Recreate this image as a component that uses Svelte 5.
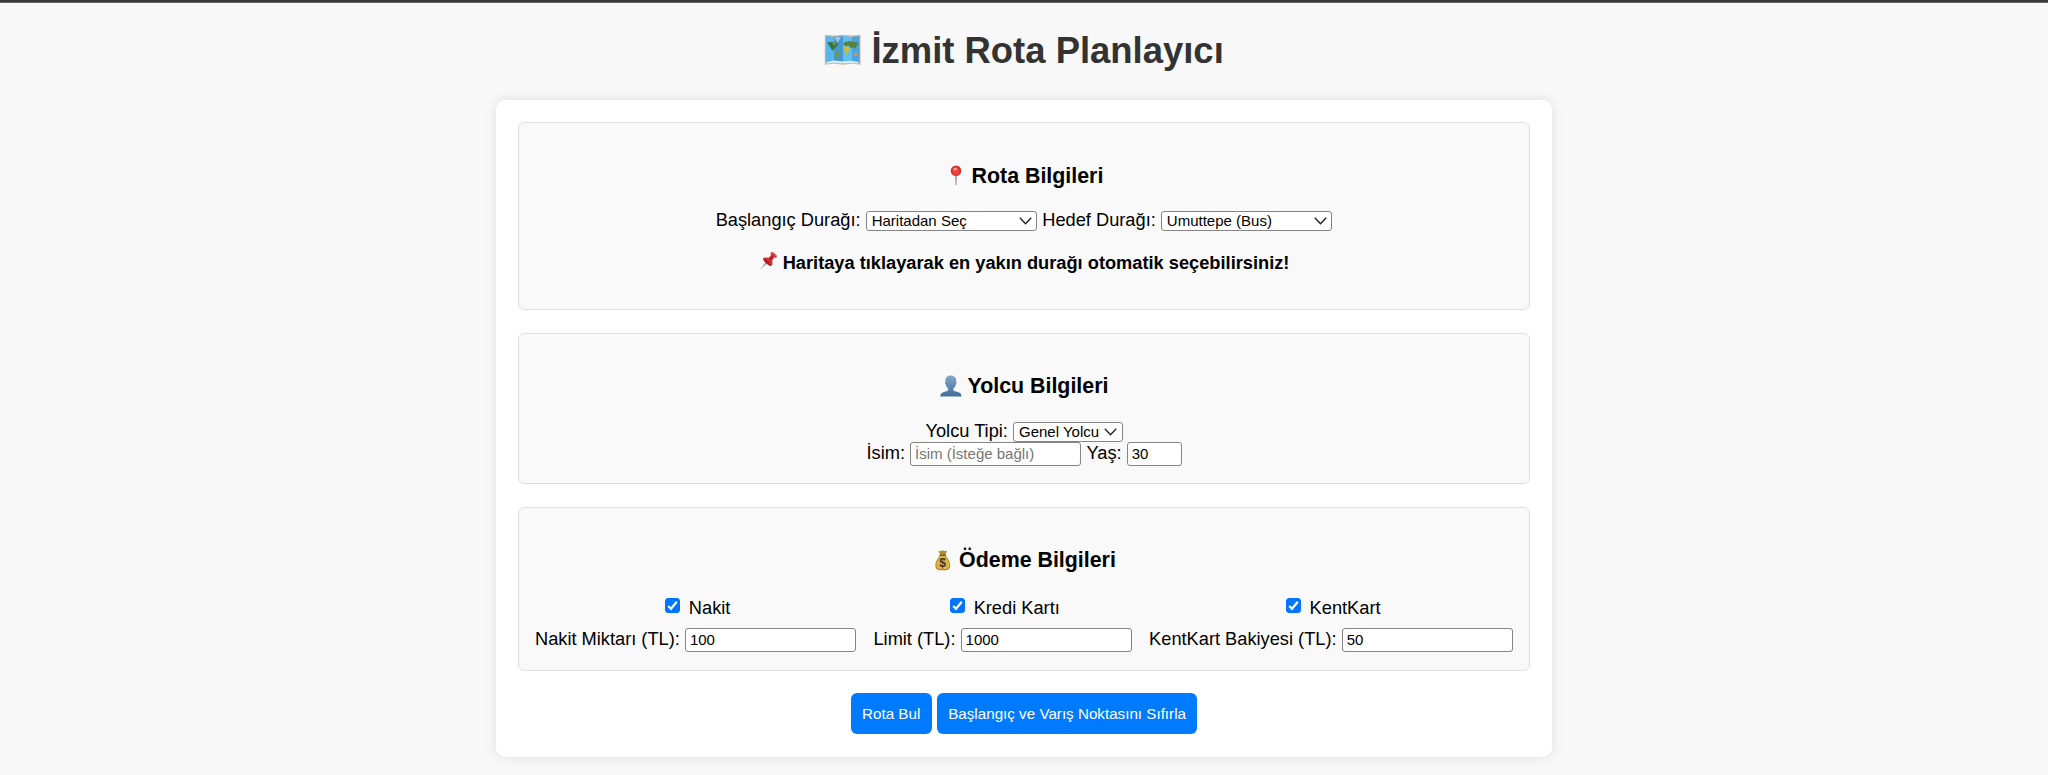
<script>
  let start = $state('Haritadan Seç');
  let target = $state('Umuttepe (Bus)');
  let passenger = $state('Genel Yolcu');
  let name = $state('');
  let age = $state('30');
  let payments = $state([
    { title: 'Nakit', label: 'Nakit Miktarı (TL):', amount: '100', on: true },
    { title: 'Kredi Kartı', label: 'Limit (TL):', amount: '1000', on: true },
    { title: 'KentKart', label: 'KentKart Bakiyesi (TL):', amount: '50', on: true }
  ]);
</script>

<div class="page">
  <h1>
    <svg class="map" width="37" height="32" viewBox="0 0 37 32">
      <path d="M.8.7 10 1.5 19 .7l9 .8 8.5-.8v30l-8.5-.9-9 .9-9-.9-9.2.9z" fill="#d9b99b" />
      <path d="M1.8 2 10 2.7v26L1.5 29.3z" fill="#59b5ed" />
      <path d="m10 2.7 9-.7v27.1l-9-.4z" fill="#4599d2" />
      <path d="m19 2 9 .7v26l-9 .4z" fill="#62bdf0" />
      <path d="m28 2.7 7.5-.7.2 27.3-7.7-.6z" fill="#4aa5de" />
      <path d="m10 4 3-1.2 4 .4-1.5 3-2.5 2-1-2.5z" fill="#a7c5d5" />
      <path d="M3 8.5 7 8l5 .5 2.5 2-2 1.2-1.5 3-2 .5 1 2-2-1L5.500 12z" fill="#39743c" />
      <path d="m11 17 3.500 1 .8 2-2.300 2.500-.8 3-1-2z" fill="#77983b" />
      <path d="m19 10 2-2 4-.7 4 .2 6 1.500-1.800 2-1.500 3-1.500.5-1-2-2.200 2-2-3-4 .8z" fill="#568336" />
      <path d="m19 12.500 4.500-.3 3 2.500-2 2.300-1 4-1.500.5-1.200-4.500-2-2z" fill="#c6bd42" />
      <path d="m8 9 4 .2-1.500 2z" fill="#aaa641" />
      <path d="m30 20 2-1.200 2 1.800-1 1.500-3-.3z" fill="#e29b35" />
      <path d="m3 28 7-1.500 9 1 8-.8 7.500 1.300v1.200L28 28.700l-9 .4-9-.4-8.300.6z" fill="#e4eef3" />
    </svg>
    <span>İzmit Rota Planlayıcı</span>
  </h1>

  <main>
    <section class="route">
      <h3>
        <svg class="pin" width="21" height="22" viewBox="0 0 21 22">
          <path d="M10.200 9h1.600l-.3 11h-.9z" fill="#8d8586" />
          <circle cx="11" cy="5.700" r="5.300" fill="#d9302d" />
          <circle cx="11" cy="6.600" r="3.600" fill="#e9413b" />
          <ellipse cx="10.300" cy="4" rx="2" ry="1.600" fill="#f8a09a" />
        </svg>
        <span>Rota Bilgileri</span>
      </h3>
      <div class="row">
        <label for="start">Başlangıç Durağı:</label>
        <select id="start" bind:value={start}><option>Haritadan Seç</option></select>
        <label for="target">Hedef Durağı:</label>
        <select id="target" bind:value={target}><option>Umuttepe (Bus)</option></select>
      </div>
      <p>
        <svg class="tack" width="19" height="19" viewBox="0 0 19 19">
          <path d="m7.500 10.500 1.300 1.200L1 18.500z" fill="#7f94a3" />
          <path d="M12 1.500c1.300-1.500 6.500 2.600 5.800 4.600-.6 1-1.900.7-2.700.4l-1.900 3.100c.6 2 .4 4.200-.8 5.400C9.400 14.500 5.200 11 4 7.700c1.200-1.300 3.400-1.300 5.300-.7l2.800-2.700c-.4-.9-.8-2-.1-2.800z" fill="#d92f36" />
          <path d="M4 7.700c2.300-.6 6.600 2.400 8.400 7.300C9.400 14.500 5.200 11 4 7.700z" fill="#ad2029" />
          <path d="m10 8 3-3 1.200 1.200-2.700 3.300z" fill="#a91d27" />
          <path d="M13 1.700c1.200-.2 3.800 1.900 4.300 3.600" fill="none" stroke="#f36b69" />
        </svg>
        <span>Haritaya tıklayarak en yakın durağı otomatik seçebilirsiniz!</span>
      </p>
    </section>

    <section class="passenger">
      <h3>
        <svg class="person" width="22" height="22" viewBox="0 0 22 22">
          <defs>
            <linearGradient id="skin" x2="0" y2="1">
              <stop stop-color="#82a9cd" />
              <stop offset="1" stop-color="#426d98" />
            </linearGradient>
          </defs>
          <path d="M10.800.5c3.800 0 5.600 2.500 5.400 6 .7.500.4 2.800-.5 3.200-.4 1.800-1.200 2.900-2.200 3.600v2.200c1.800 1.300 5.600 1.300 7 2.900.8.800 1 2 1 3.100H.3c0-1.100.2-2.300 1-3.100 1.400-1.600 5-1.600 6.800-2.900v-2.200C7 12.600 6.300 11.500 5.900 9.700 5 9.300 4.700 7 5.400 6.500 5.200 3 7 .5 10.800.5z" fill="url(#skin)" />
        </svg>
        <span>Yolcu Bilgileri</span>
      </h3>
      <div class="row">
        <label for="type">Yolcu Tipi:</label>
        <select id="type" class="short" bind:value={passenger}><option>Genel Yolcu</option></select>
      </div>
      <div class="row">
        <label for="name">İsim:</label>
        <input id="name" type="text" placeholder="İsim (İsteğe bağlı)" bind:value={name} />
        <label for="age">Yaş:</label>
        <input id="age" class="age" type="text" bind:value={age} />
      </div>
    </section>

    <section class="payment">
      <h3>
        <svg class="bag" width="21" height="22" viewBox="0 0 21 22">
          <path d="m6.500 1.500 2 .8 2.300-1 2 1 2.300-.8-1.800 4.800H8.200z" fill="#b28b36" />
          <path d="M8 6.500h5.500c2.500 3 4.700 6.300 4.700 9.800 0 3.300-1.800 4.900-4 4.900H7.300c-2.300 0-4-1.600-4-4.900C3.300 12.800 5.500 9.500 8 6.500z" fill="#b28a2e" />
          <path d="M8.500 7h4.300c2.300 2.800 4.300 6 4.300 9 0 2.700-1.500 3.900-3.300 3.900H7.600c-1.900 0-3.200-1.200-3.200-3.900 0-3 1.900-6.200 4.100-9z" fill="#ddb747" />
          <path d="M7.500 6.300h6.300" stroke="#78551d" stroke-width="1.300" />
          <text x="10.700" y="18" text-anchor="middle">$</text>
        </svg>
        <span>Ödeme Bilgileri</span>
      </h3>
      <div class="methods">
        {#each payments as item}
          <div class="method">
            <label class="check"><input type="checkbox" bind:checked={item.on} /><span>{item.title}</span></label>
            <label class="row"><span>{item.label}</span><input type="text" bind:value={item.amount} /></label>
          </div>
        {/each}
      </div>
    </section>

    <div class="actions">
      <button>Rota Bul</button>
      <button>Başlangıç ve Varış Noktasını Sıfırla</button>
    </div>
  </main>
</div>

<style>
  :global(body) { background: #f8f8f8; }
  .page {
    box-sizing: border-box;
    height: 775px;
    overflow: hidden;
    border-top: 2px solid #3a3a3a;
    box-shadow: inset 0 1px #686868;
    background: #f8f8f8;
    color: #000;
    font: 18.24px/18px Arial, "Liberation Sans", sans-serif;
  }
  h1, h3, p, .row, .check, .actions { display: flex; justify-content: center; }
  h1 {
    margin: 27px 0 28.5px;
    height: 42px;
    gap: 10.2px;
    color: #333;
    font-size: 36.45px;
    line-height: 43px;
  }
  .map { margin-top: 5px; }
  main {
    box-sizing: border-box;
    width: 1056.5px;
    height: 657px;
    margin: 0 auto;
    padding: 22.5px 22.500px;
    border-radius: 9px;
    background: #fff;
    box-shadow: 0 0 11.5px rgba(0, 0, 0, .1);
  }
  section {
    box-sizing: border-box;
    margin-bottom: 23px;
    padding: 40px 16px 0;
    border: 1px solid #e0e0e0;
    border-radius: 6px;
    background: #f9f9f9;
  }
  .route { height: 188px; padding-top: 41px; }
  .passenger { height: 151px; }
  .payment { height: 164px; margin-bottom: 22px; }
  h3 { margin: 0 0 24px; height: 24px; gap: 5.95px; font-size: 21.39px; line-height: 24px; }
  .route h3 { margin-bottom: 23px; }
  h3 svg { margin-top: 1px; }
  p { margin: 20.500px 0 0; height: 20px; gap: 5.08px; font-weight: bold; line-height: 21px; }
  .tack { margin-top: -1px; }
  .row { align-items: baseline; gap: 5.08px; white-space: nowrap; }
  select, input, button { box-sizing: border-box; margin: 0; font: 15px Arial, "Liberation Sans", sans-serif; color: #000; }
  select, input { border: 1px solid #858585; border-radius: 3px; outline: 0; background-color: #fff; }
  select {
    appearance: none;
    width: 171.5px;
    height: 20px;
    padding: 0 5px 1.500px;
    background-image: url("data:image/svg+xml,%3Csvg xmlns='http://www.w3.org/2000/svg' width='13' height='8' viewBox='0 0 13 8'%3E%3Cpath d='M.8.8 6.500 6.700 12.200.8' fill='none' stroke='%23222' stroke-width='1.400'/%3E%3C/svg%3E");
    background-repeat: no-repeat;
    background-position: right 4.500px center;
  }
  .short { width: 109.500px; }
  input { width: 171.400px; height: 24px; padding: 0 4px 1px; }
  input::placeholder { color: #757575; opacity: 1; }
  .age { width: 54.800px; }
  .methods { display: flex; justify-content: center; gap: 17.14px; }
  .check { height: 22px; margin-bottom: 10px; line-height: 23px; }
  .check input {
    appearance: none;
    width: 15px;
    height: 15px;
    margin: 2px 8.500px 0 4.500px;
    padding: 0;
    border: 1px solid #767676;
  }
  .check input:checked {
    border-color: #0075ff;
    background: #0075ff url("data:image/svg+xml,%3Csvg xmlns='http://www.w3.org/2000/svg' width='13' height='13' viewBox='0 0 13 13'%3E%3Cpath d='M2.200 7 5 9.800 10.800 2.700' fill='none' stroke='white' stroke-width='2.200'/%3E%3C/svg%3E") center / 13px no-repeat;
  }
  .actions { gap: 5.08px; }
  button { height: 41px; padding: 0 11.43px 1px; border: 0; border-radius: 6px; background: #007bff; color: #fff; font-size: 15.200px; }
  .bag text { font: bold 12px "Liberation Sans", sans-serif; fill: #3b3628; }
</style>
